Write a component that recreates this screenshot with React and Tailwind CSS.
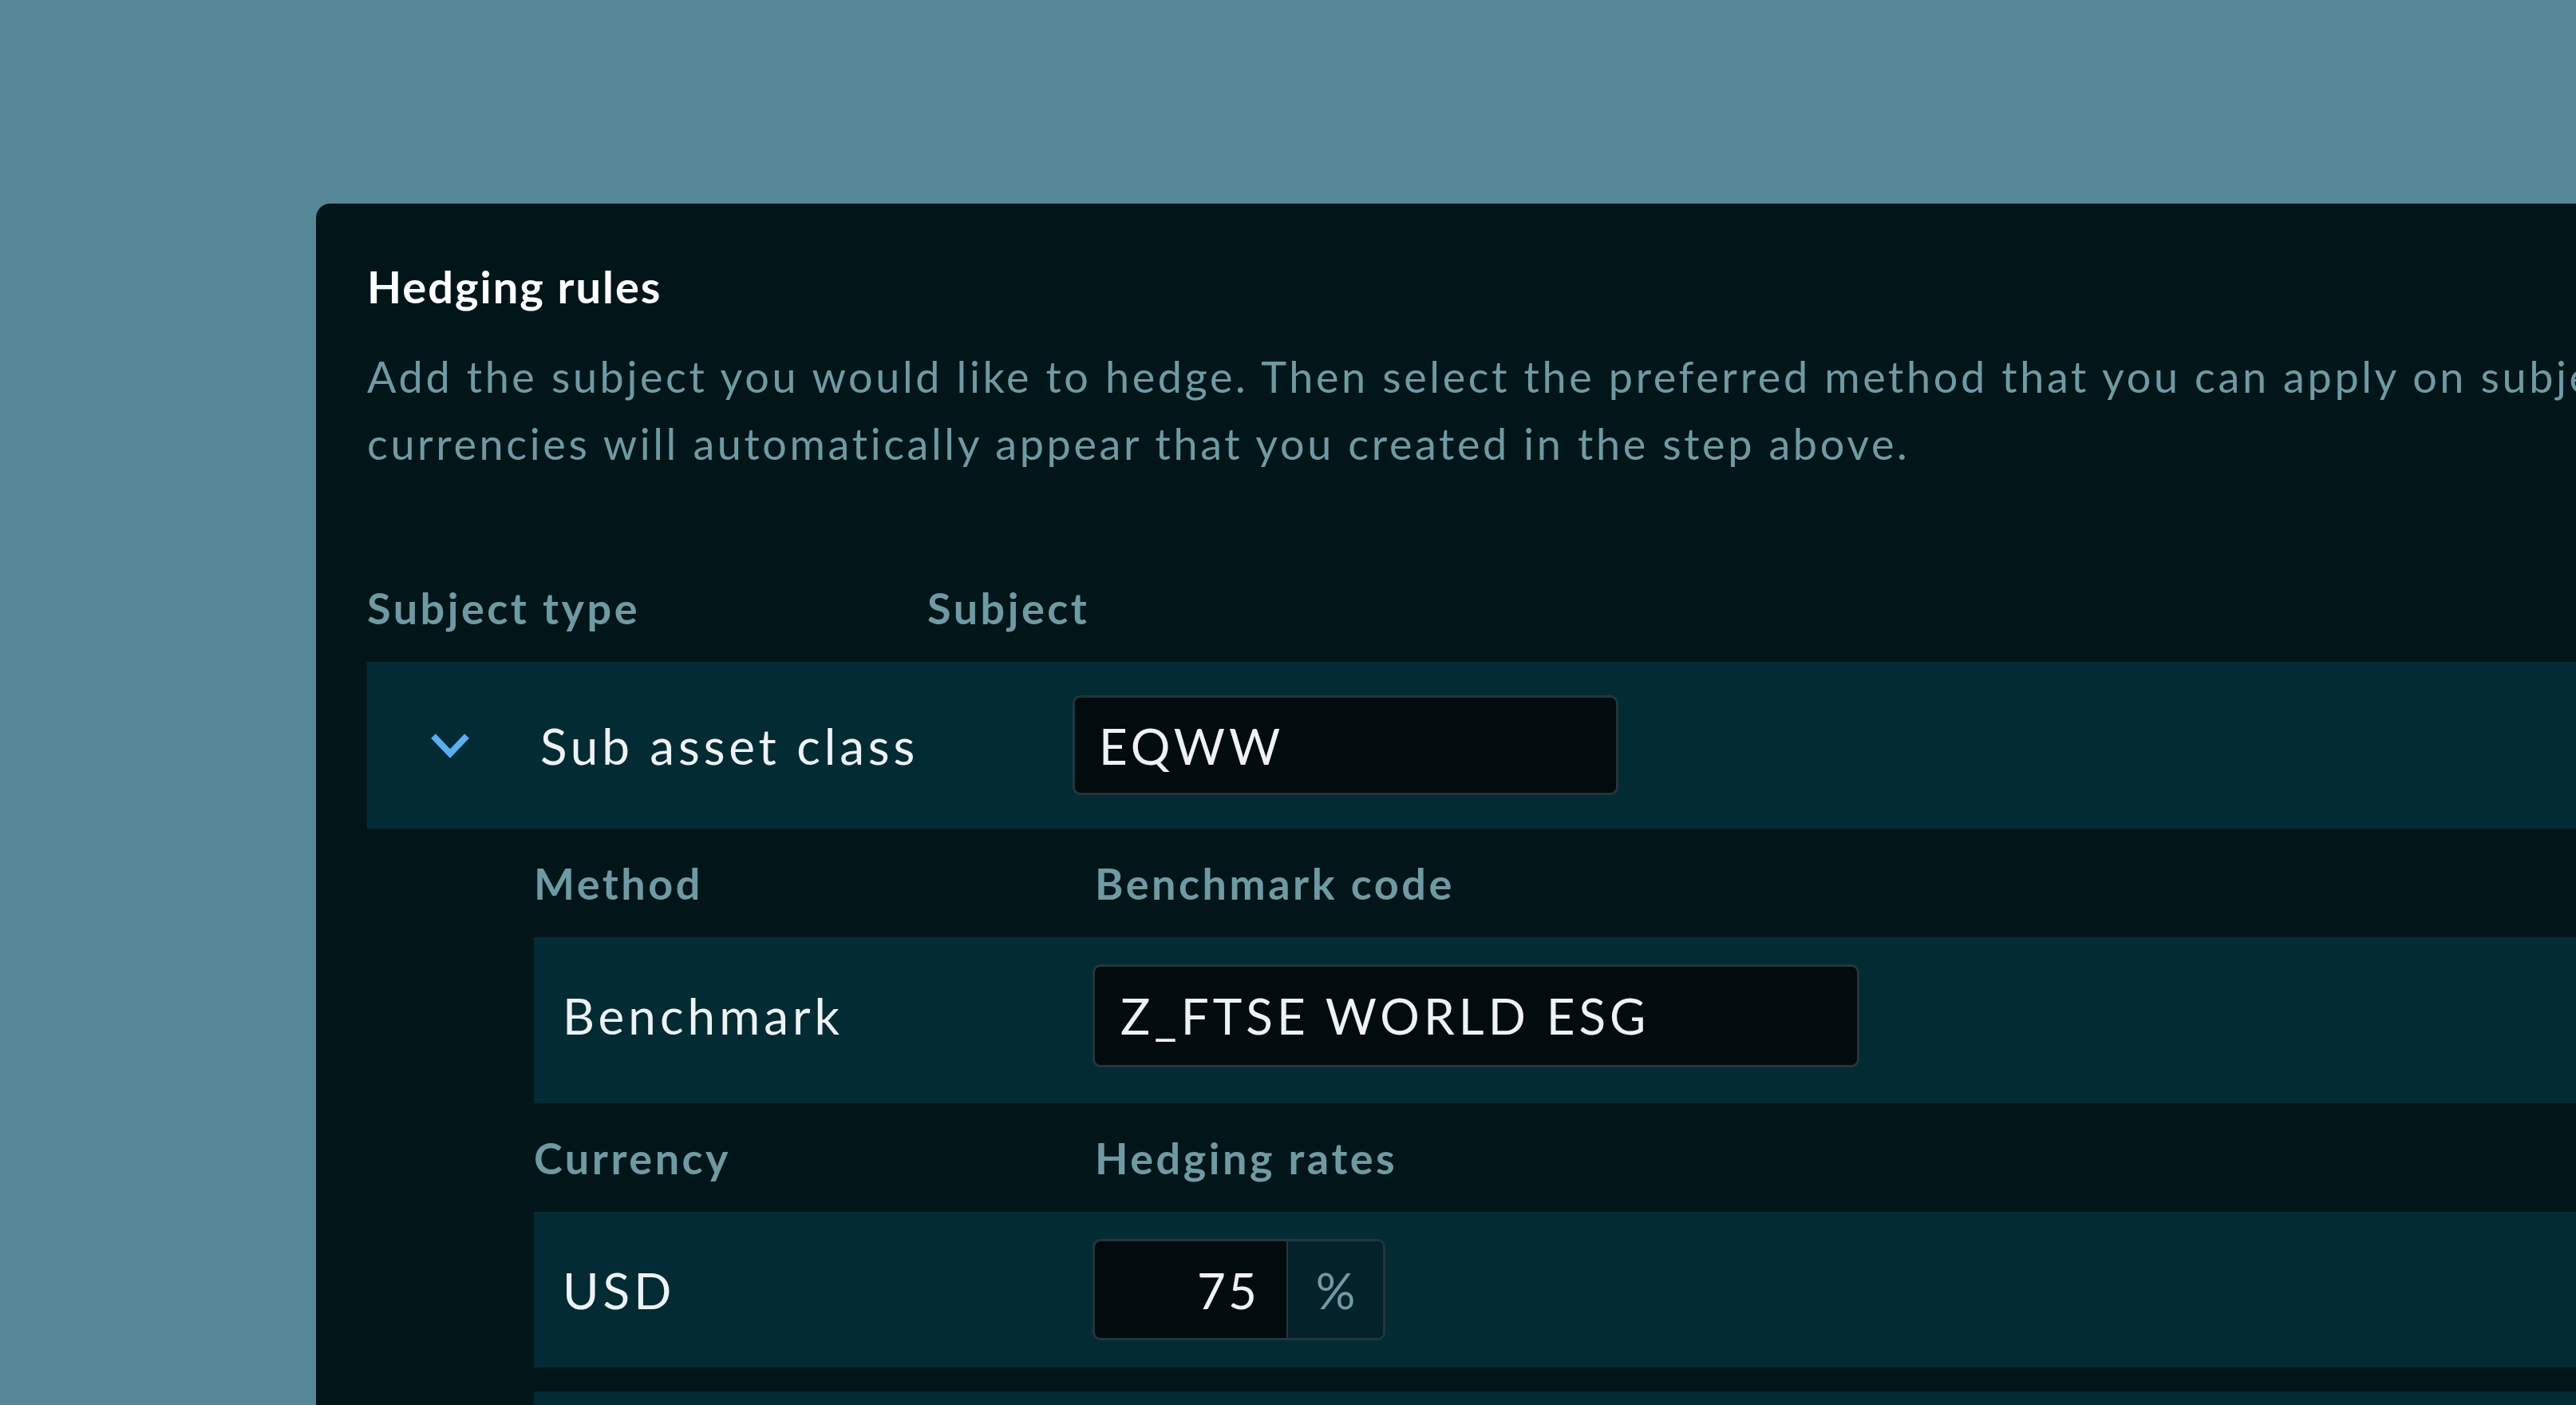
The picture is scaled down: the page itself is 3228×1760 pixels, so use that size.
export default function App() {
  return (
    <div className="w-[3228px] h-[1760px] overflow-hidden bg-[#558797] pt-[255px] pl-[396px] font-['Lato',sans-serif]">
      <div className="w-[3100px] h-[1700px] bg-[#02161a] rounded-tl-[18px] pl-[64px] pt-[76px]">
        <h1 className="text-[56px] leading-[56px] font-bold tracking-[2px] text-white">Hedging rules</h1>
        <p className="mt-[43px] text-[54px] leading-[84px] tracking-[3.6px] text-[#6f9aa3]">
          <span className="block whitespace-nowrap">
            Add the subject you would like to hedge. Then select the preferred method that you can apply on subject level. The
          </span>
          <span className="block whitespace-nowrap">
            currencies will automatically appear that you created in the step above.
          </span>
        </p>

        <div className="mt-[95px] h-[136px] flex items-end pb-[40px] text-[54px] leading-none font-bold tracking-[3.5px] text-[#6f9aa3]">
          <span className="w-[702px]">Subject type</span>
          <span>Subject</span>
        </div>

        <div className="h-[209px] bg-[#032b33] flex items-center pl-[79px]">
          <svg width="50" height="32" viewBox="0 0 50 32" className="shrink-0">
            <polyline points="4,4 25,26 46,4" fill="none" stroke="#5aaef2" strokeWidth="8" strokeLinejoin="miter" />
          </svg>
          <span className="ml-[88px] w-[667px] text-[62px] leading-none tracking-[4.8px] text-[#eef2f5]">Sub asset class</span>
          <div className="w-[684px] h-[125px] rounded-[10px] border-[3px] border-[#24363b] bg-[#020b0d] flex items-center pl-[30px] text-[62px] leading-none tracking-[5px] text-[#eef2f5]">
            EQWW
          </div>
        </div>

        <div className="ml-[209px]">
          <div className="h-[136px] flex items-end pb-[40px] text-[54px] leading-none font-bold tracking-[3.5px] text-[#6f9aa3]">
            <span className="w-[703px]">Method</span>
            <span>Benchmark code</span>
          </div>
          <div className="h-[208px] bg-[#032b33] flex items-center pl-[36px] pb-[12px]">
            <span className="w-[664px] text-[62px] leading-none tracking-[5px] text-[#eef2f5]">Benchmark</span>
            <div className="w-[961px] h-[129px] rounded-[10px] border-[3px] border-[#24363b] bg-[#020b0d] flex items-center pl-[32px] text-[62px] leading-none tracking-[5px] text-[#eef2f5]">
              Z_FTSE WORLD ESG
            </div>
          </div>

          <div className="h-[136px] flex items-end pb-[40px] text-[54px] leading-none font-bold tracking-[3.5px] text-[#6f9aa3]">
            <span className="w-[703px]">Currency</span>
            <span>Hedging rates</span>
          </div>
          <div className="h-[195px] bg-[#032b33] flex items-center pl-[36px]">
            <span className="w-[664px] text-[62px] leading-none tracking-[5px] text-[#eef2f5]">USD</span>
            <div className="w-[367px] h-[127px] rounded-[10px] border-[3px] border-[#24363b] bg-[#020b0d] flex overflow-hidden">
              <div className="w-[240px] flex items-center justify-end pr-[34px] text-[62px] leading-none tracking-[3px] text-[#eef2f5]">75</div>
              <div className="flex-1 border-l-[2px] border-[#24363b] bg-[#04222a] flex items-center justify-center text-[62px] leading-none text-[#6f9aa3]">%</div>
            </div>
          </div>

          <div className="mt-[30px] h-[195px] bg-[#032b33]" />
        </div>
      </div>
    </div>
  );
}
